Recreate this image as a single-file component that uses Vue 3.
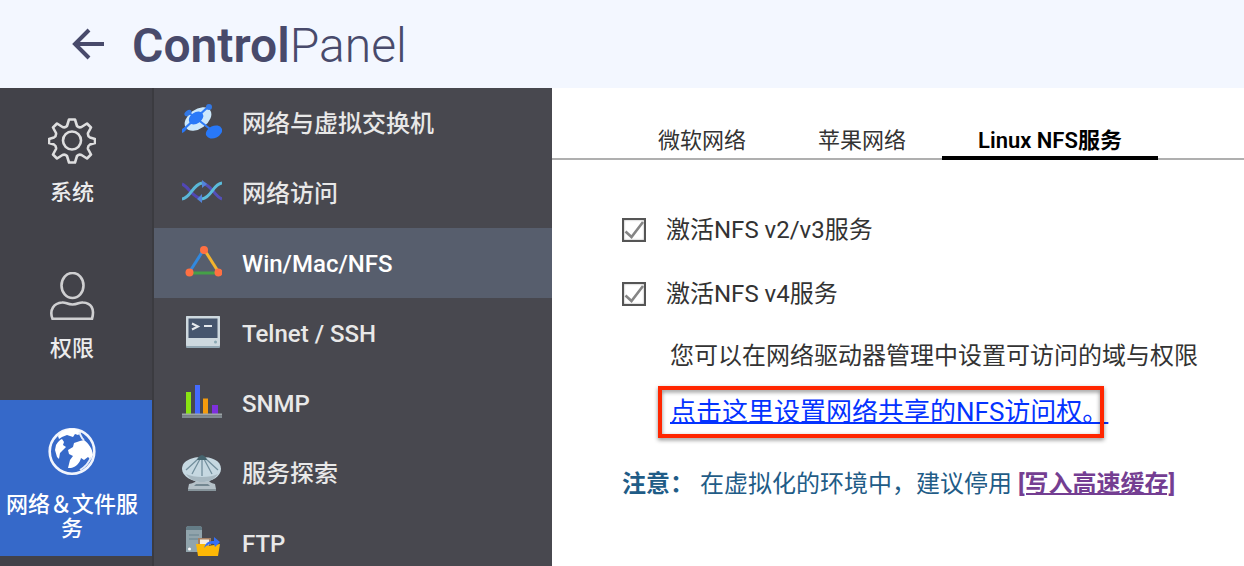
<script setup>
import { ref } from 'vue'

const sections = ref([
  { id: 'system', label: '系统', active: false },
  { id: 'privilege', label: '权限', active: false },
  { id: 'network', label: '网络＆文件服务', active: true }
])

const services = ref([
  { id: 'switch', label: '网络与虚拟交换机', active: false },
  { id: 'access', label: '网络访问', active: false },
  { id: 'share', label: 'Win/Mac/NFS', active: true },
  { id: 'telnet', label: 'Telnet / SSH', active: false },
  { id: 'snmp', label: 'SNMP', active: false },
  { id: 'discovery', label: '服务探索', active: false },
  { id: 'ftp', label: 'FTP', active: false }
])

const tabs = ['微软网络', '苹果网络', 'Linux NFS服务']
const currentTab = ref(2)

const options = ref([
  { id: 'nfs3', label: '激活NFS v2/v3服务', on: true },
  { id: 'nfs4', label: '激活NFS v4服务', on: true }
])
</script>

<template>
  <div class="page">
    <header class="header">
      <button class="back" type="button" aria-label="返回">
        <svg viewBox="0 0 34 34" width="34" height="34" fill="none" stroke="#484a6b" stroke-width="4">
          <path d="M33 17H4M18 3 4 17l14 14" />
        </svg>
      </button>
      <h1 class="title"><b>Control</b><span>Panel</span></h1>
    </header>

    <div class="body">
      <nav class="sections">
        <button v-for="s in sections" :key="s.id" type="button" class="section" :class="{ active: s.active }">
          <svg v-if="s.id === 'system'" class="section-icon" viewBox="0 -2 48 48" fill="none" stroke="#dededf" stroke-width="2.600" stroke-linejoin="round">
            <path d="M21 1.500h6l2 6.500q2 2 4.500 1l5.500-3.500 4 4-3 5.500q-.5 3 2 4.500l5 1.500v4l-5 1.500q-2.500 1.500-2 4.500l3 5.500-4 4-5.500-3.500q-2.500-1-4.500 1l-2 6.500h-6l-2-6.500q-2-2-4.500-1L9 40.500l-4-4L8 31q.5-3-2-4.500L1 25v-4l5-1.500Q8.500 18 8 15L5 9.500l4-4L14.500 9q2.500 1 4.500-1z" />
            <circle cx="24" cy="22.500" r="9" />
          </svg>
          <svg v-else-if="s.id === 'privilege'" class="section-icon" viewBox="0 0 48 48" fill="none" stroke="#cfcfd1" stroke-width="2.600">
            <ellipse cx="24.500" cy="13.500" rx="11" ry="12.500" />
            <path d="M4.500 46.800C1 38 6 31 14 30.500c4-.5 5 2 10.500 2s6.500-2.500 10.500-2c8 .5 12 6 9 16.300z" />
          </svg>
          <svg v-else class="section-icon" viewBox="0 0 48 48">
            <circle cx="24" cy="23.500" r="22.300" fill="none" stroke="#f1f5fd" stroke-width="2.600" />
            <path d="M10 8C14 3 18 1 24 1c5 0 8 1 9 4l-3 2-3-1-2 3-6-2-5 2-3 2z" fill="#fff" />
            <path d="M8 17q3-5 6-6l2 3-1 3 3 2-3 3-3 3-1 6-2-2-2-7z" fill="#fff" />
            <path d="m20 22 5-3 1-4 6-2 4-1c5 4 8 8 9 15l-2 5-3-3-4 3-3-2c-1 5-5 9-10 10h-3l2-8 3-4-4-2z" fill="#fff" />
            <path d="M31 4c2 3 2 6 5 8M43 29c-2 6-6 10-11 13" fill="none" stroke="#e5edfb" stroke-width="2" />
          </svg>
          <span class="section-label">{{ s.label }}</span>
        </button>
      </nav>

      <nav class="services">
        <button v-for="m in services" :key="m.id" type="button" class="service" :class="{ active: m.active }">
          <svg v-if="m.id === 'switch'" class="service-icon" viewBox="0 0 40 40">
            <ellipse cx="16" cy="18" rx="15" ry="9.500" transform="rotate(-36 16 18)" fill="#cce8fb" />
            <path d="M1 29 27 5M6 11l26 20" stroke="#2f7cf6" stroke-width="2.200" />
            <ellipse cx="14" cy="17" rx="8" ry="5.500" transform="rotate(-35 14 17)" fill="#2979f8" />
            <ellipse cx="32" cy="31" rx="8.500" ry="6" transform="rotate(-25 32 31)" fill="#2878f8" />
            <circle cx="27" cy="6" r="3" fill="#3378e4" />
            <ellipse cx="6" cy="12" rx="4" ry="2.500" transform="rotate(-38 6 12)" fill="#3378e4" />
            <path d="M0 28q3-2 5 0l-3 3-2 1z" fill="#2878f8" />
          </svg>
          <svg v-else-if="m.id === 'access'" class="service-icon" viewBox="0 0 40 40" fill="none" stroke-width="3">
            <path d="M0 13c7 3 10 13 20 15" stroke="#5147b5" />
            <path d="M20 12c10 2 12 13 20 16" stroke="#5450ba" />
            <path d="M0 28c9-1 10-14 20-16" stroke="#5ab7d8" />
            <path d="M20 28c10-2 11-15 20-16" stroke="#5bbcdb" />
            <path d="m20 9 5 4-5 4zM20 23l-5 5 5 4z" fill="#5284d9" />
          </svg>
          <svg v-else-if="m.id === 'share'" class="service-icon" viewBox="0 0 40 40" stroke-width="3">
            <path d="m21.500 9-14 22" stroke="#3189df" />
            <path d="m22.500 9 14 22" stroke="#f3b42e" />
            <path d="M7 32h29" stroke="#45a047" />
            <g fill="#ff7042" stroke="none"><circle cx="22" cy="9" r="4" /><circle cx="7.500" cy="31.500" r="4" /><circle cx="36.500" cy="31.500" r="4" /></g>
          </svg>
          <svg v-else-if="m.id === 'telnet'" class="service-icon" viewBox="0 0 40 40">
            <rect x="4" y="5" width="34" height="32" rx="1" fill="#93a8b4" />
            <rect x="4" y="5" width="34" height="30" rx="1" fill="#ced9df" />
            <rect x="6.500" y="7.500" width="29" height="19.500" fill="#46566e" />
            <path d="m10 12.500 6 3-6 3M22 15h8" fill="none" stroke="#e4e9ed" stroke-width="2" />
            <circle cx="33.500" cy="31" r="1.500" fill="#8aa8b3" />
          </svg>
          <svg v-else-if="m.id === 'snmp'" class="service-icon" viewBox="0 0 40 40">
            <path fill="#89e312" d="M4 11h5v22H4z" />
            <path fill="#446bff" d="M13 4h5v29h-5z" />
            <path fill="#f49b0c" d="M21 17.500h5V33h-5z" />
            <path fill="#7e30dd" d="M30 24h6v9h-6z" />
            <path fill="#9ca4a7" d="M0 32.500h40v2H0z" />
            <path fill="#7e888e" d="M0 34.500h40V37H0z" />
          </svg>
          <svg v-else-if="m.id === 'discovery'" class="service-icon" viewBox="0 0 40 40">
            <path d="M7 33q7-1 8-5h11q1 4 7 5l1 5H6z" fill="#b5c1c8" />
            <path d="M6 38h28v2H6z" fill="#87959c" />
            <path d="M0 18C0 9 11 6 20 6s19 3 19 12c0 7-9 13-19 13S0 25 0 18z" fill="#c6d8e1" />
            <path d="M4 23c8 4 24 4 32 0-4 6-10 8-16 8S8 29 4 23z" fill="#a7b8c1" />
            <path d="M20 7v18M18 8l-8 15M22 8l8 15M16 8 4 19M24 8l12 11" stroke="#74909e" stroke-width="1.300" />
            <path d="M15 9q1-4 5-5 4 1 5 5z" fill="#45646e" />
            <path d="M14 33h12l2 2H12z" fill="#738791" />
          </svg>
          <svg v-else class="service-icon" viewBox="0 0 40 40">
            <path d="M4 8q0-3 3-3h10q3 0 3 3v23H4z" fill="#91a4ac" />
            <path d="M4 8q0-3 3-3h10q3 0 3 3v1H4z" fill="#647c86" />
            <path d="M7 14h10M7 18h10" stroke="#758d98" stroke-width="1.500" />
            <circle cx="7.500" cy="28" r="1.500" fill="#fff" />
            <path d="M16 17h13v7H16z" fill="#a67f62" />
            <path d="M18 18.500h9v6h-9z" fill="#f7eddd" />
            <path d="M14 23h9l3 2 12-2-2 12H16z" fill="#fdb806" />
            <path d="M22 27q2-8 10-7v-4l6 5-5 5-1-3q-5-1-10 4z" fill="#346ff5" />
          </svg>
          <span class="service-label">{{ m.label }}</span>
        </button>
      </nav>

      <main class="content">
        <div class="tabs" role="tablist">
          <button
            v-for="(t, i) in tabs"
            :key="t"
            type="button"
            role="tab"
            class="tab"
            :class="{ current: i === currentTab }"
            :aria-selected="i === currentTab"
            @click="currentTab = i"
          >{{ t }}</button>
        </div>

        <div class="panel">
          <div v-for="o in options" :key="o.id" class="option">
            <span class="tick">
              <input :id="o.id" v-model="o.on" type="checkbox" />
              <svg v-if="o.on" viewBox="0 0 24 24" fill="none" stroke="#858585" stroke-width="2.600">
                <path d="m3.500 13.500 6 5.500L21 4" />
              </svg>
            </span>
            <label :for="o.id">{{ o.label }}</label>
          </div>
          <p class="hint">您可以在网络驱动器管理中设置可访问的域与权限</p>
          <div class="access"><a href="#nfs-access">点击这里设置网络共享的NFS访问权。</a></div>
          <p class="note"><b>注意：</b> 在虚拟化的环境中，建议停用 <a href="#write-cache">[写入高速缓存]</a></p>
        </div>
      </main>
    </div>
  </div>
</template>

<style>
body {
  margin: 0;
}
</style>

<style scoped>
.page {
  display: flex;
  flex-direction: column;
  height: 100vh;
  overflow: hidden;
  background: #fff;
  color: #333;
  font-family: Roboto, "Noto Sans CJK SC", sans-serif;
}

button {
  margin: 0;
  padding: 0;
  border: 0;
  background: none;
  color: inherit;
  font: inherit;
  cursor: pointer;
}

.header {
  display: flex;
  flex: none;
  align-items: center;
  gap: 27px;
  height: 88px;
  padding: 0 71px;
  background: #f3f7ff;
}

.back,
.back svg {
  display: block;
}

.title {
  margin: 0;
  padding-top: 4px;
  color: #484a6b;
  font-size: 48px;
  font-weight: 300;
  line-height: 56px;
}

.title b {
  font-weight: 600;
}

.body {
  display: flex;
  flex: 1;
  min-height: 0;
}

.sections {
  flex: none;
  width: 152px;
  border-right: 2px solid #3b3b40;
  background: #424249;
  color: #ececed;
  font-size: 22px;
  font-weight: 500;
  line-height: 24px;
}

.section {
  display: flex;
  flex-direction: column;
  align-items: center;
  gap: 17px;
  width: 100%;
  height: 156px;
  padding: 28px 8px 0 0;
}

.section.active {
  background: #3669c9;
  color: #fff;
}

.section-icon {
  flex: none;
  width: 48px;
  height: 48px;
}

.services {
  flex: none;
  width: 398px;
  background: #48484f;
  color: #e8e8e8;
  font-size: 24px;
  font-weight: 500;
  line-height: 32px;
}

.service {
  display: flex;
  align-items: center;
  gap: 20px;
  width: 100%;
  height: 70px;
  padding: 0 28px;
}

.service.active {
  background: #575e6d;
  color: #fff;
}

.service-icon {
  flex: none;
  width: 40px;
  height: 40px;
  margin-bottom: 4px;
}

.service-label {
  padding-top: 2px;
}

.content {
  flex: 1;
  min-width: 0;
}

.tabs {
  display: flex;
  height: 72px;
  padding-left: 70px;
  background: linear-gradient(#afafaf, #afafaf) bottom / 100% 2px no-repeat;
  font-size: 22px;
  line-height: 24px;
}

.tab {
  padding: 41px 36px 3px;
  border-bottom: 4px solid transparent;
  white-space: nowrap;
}

.tab.current {
  border-bottom-color: #000;
  color: #000;
  font-weight: 600;
}

.panel {
  padding: 54px 40px 0 70px;
  font-size: 24px;
  line-height: 32px;
  white-space: nowrap;
}

.option {
  display: flex;
  align-items: center;
  gap: 20px;
  margin-bottom: 32px;
}

.tick {
  position: relative;
  width: 24px;
  height: 24px;
}

.tick input {
  display: block;
  box-sizing: border-box;
  width: 24px;
  height: 24px;
  margin: 0;
  border: 2px solid #555;
  background: #fff;
  box-shadow: inset 0 0 2px #999;
  appearance: none;
}

.tick svg {
  position: absolute;
  inset: 0;
  pointer-events: none;
}

.hint {
  margin: -2px 0 24px 48px;
}

.access {
  position: relative;
  width: fit-content;
  margin: 0 0 40px 48px;
  font-size: 26px;
}

.access a {
  color: #0433ff;
  text-decoration-thickness: 2px;
}

.access::after {
  position: absolute;
  inset: -10px 4px -10px -12px;
  border: 4px solid #ff2600;
  filter: drop-shadow(0 2px 2px rgb(0 0 0 / 45%));
  content: "";
  pointer-events: none;
}

.note {
  margin: 0;
  color: #1f5c87;
}

.note a {
  color: #743e92;
  font-weight: 700;
  text-decoration-thickness: 2px;
}
</style>
